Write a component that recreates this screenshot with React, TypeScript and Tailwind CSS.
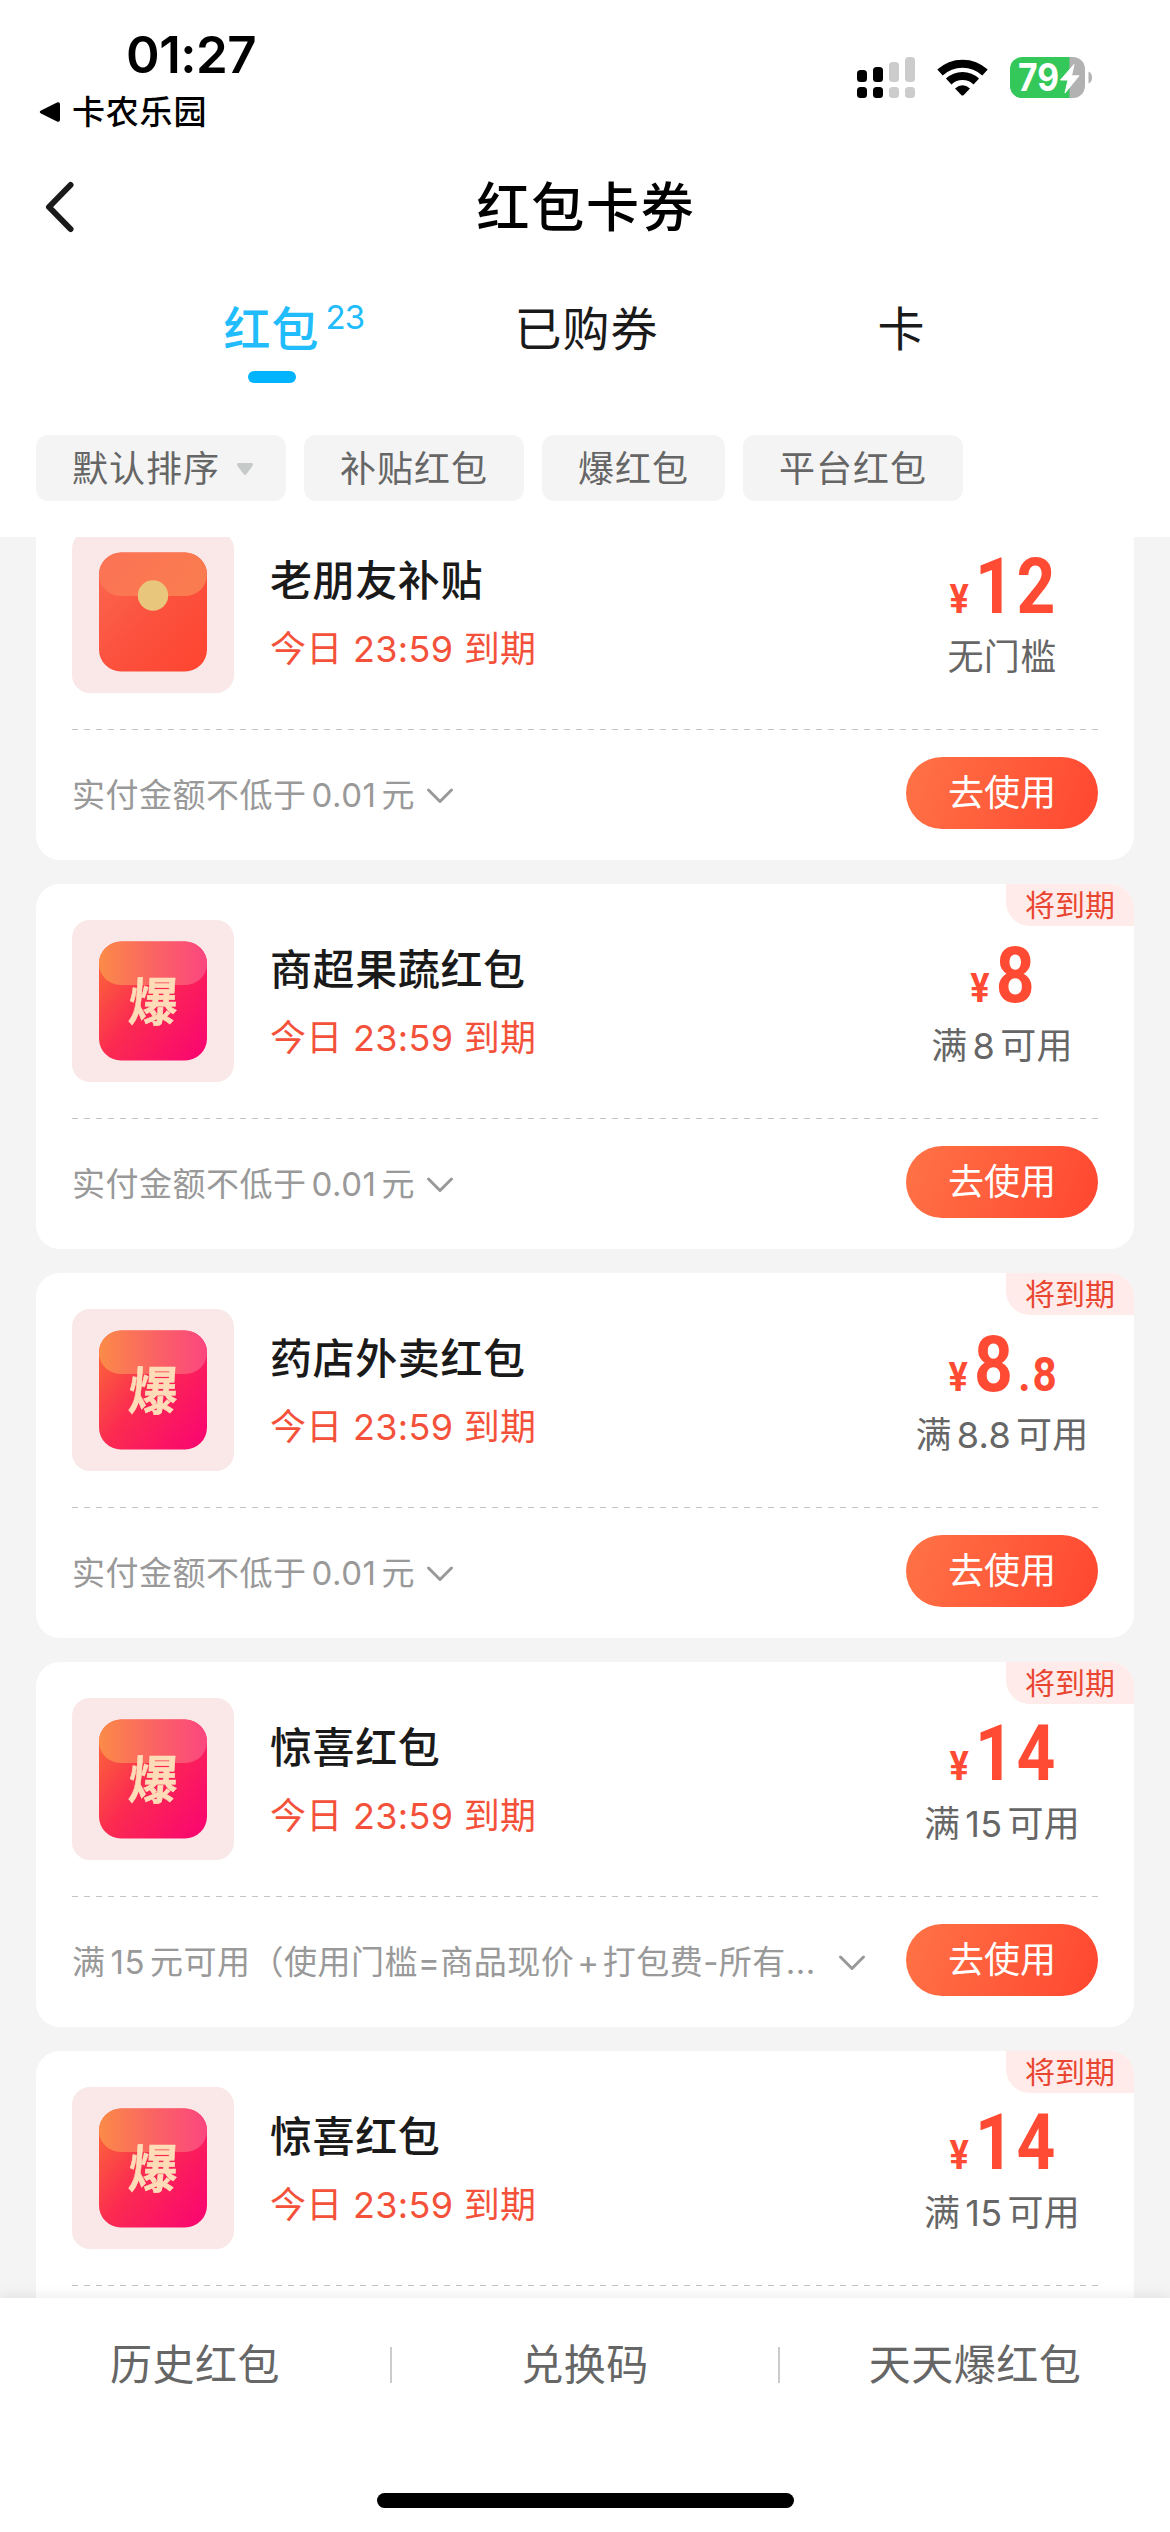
import { useState } from "react";
import clsx from "clsx";

type Coupon = {
    id: string;
    kind: 'subsidy' | 'boom';
    title: string;
    amount: string;
    threshold: string;
    rule?: string;
    long?: boolean;
    expiring: boolean;
};

const coupons: Coupon[] = [
    { id: 'c1', kind: 'subsidy', title: '老朋友补贴', amount: '12', threshold: '无门槛', rule: '实付金额不低于0.01元', expiring: false },
    { id: 'c2', kind: 'boom', title: '商超果蔬红包', amount: '8', threshold: '满8可用', rule: '实付金额不低于0.01元', expiring: true },
    { id: 'c3', kind: 'boom', title: '药店外卖红包', amount: '8.8', threshold: '满8.8可用', rule: '实付金额不低于0.01元', expiring: true },
    { id: 'c4', kind: 'boom', title: '惊喜红包', amount: '14', threshold: '满15可用', rule: '满15元可用（使用门槛=商品现价+打包费-所有...', long: true, expiring: true },
    { id: 'c5', kind: 'boom', title: '惊喜红包', amount: '14', threshold: '满15可用', expiring: true },
];

const tabs = [
    { name: '红包', count: 23 },
    { name: '已购券', count: 0 },
    { name: '卡', count: 0 },
];

const filters = ['默认排序', '补贴红包', '爆红包', '平台红包'];

// Adds a little air between numbers and Chinese characters
function Spaced({ text }: { text: string }) {
    return (
        <>
            {text.split(/(\d[\d.]*|\+)/).map((part, i) =>
                /^[\d+]/.test(part) ? <span key={i} className={part === '+' ? 'mx-[3px]' : 'mx-[5px]'}>{part}</span> : part
            )}
        </>
    );
}

function StatusBar() {
    return (
        <div className="flex h-[147px] justify-between pl-[38px] pr-[77px] text-black">
            <div className="flex flex-col">
                <div className="mt-[28px] ml-[88px] text-[51px] leading-[54px] font-semibold tracking-[-0.5px]">01:27</div>
                <div className="mt-[10px] flex items-center gap-[11px]">
                    <svg width="23" height="22" viewBox="0 0 23 22">
                        <path d="M3 9.5 19 1.4Q22 .4 22 3.500V18.500Q22 21.600 19 20.600L3 12.500Q.5 11 3 9.500Z" />
                    </svg>
                    <span className="text-[33px] leading-[40px] font-medium tracking-[0.8px]">卡农乐园</span>
                </div>
            </div>
            <svg className="mt-[54px]" width="236" height="48" viewBox="0 0 236 48">
                <g fill="#000">
                    <rect x="0" y="16" width="10" height="12" rx="3.500" />
                    <rect x="16" y="13" width="10" height="15" rx="3.500" />
                    <rect x="0" y="33" width="10" height="11" rx="3.500" />
                    <rect x="16" y="33" width="10" height="11" rx="3.500" />
                </g>
                <g fill="#ccc">
                    <rect x="32" y="8" width="10" height="20" rx="3.500" />
                    <rect x="48" y="3" width="10" height="25" rx="3.500" />
                    <rect x="32" y="33" width="10" height="11" rx="3.500" />
                    <rect x="48" y="33" width="10" height="11" rx="3.500" />
                </g>
                <g fill="none" stroke="#000" strokeWidth="8">
                    <path d="M83 18.500A33 33 0 0 1 128 18.500" />
                    <path d="M91.700 27.500A20 20 0 0 1 119.300 27.500" />
                </g>
                <path d="M98 34.500Q105.500 28 113 34.500L106.500 41.200Q105.500 42 104.500 41.200Z" />
                <path d="M165 3h48v41h-48a12 12 0 0 1-12-12V15a12 12 0 0 1 12-12Z" fill="#34c759" />
                <path d="M212.500 3H216a12 12 0 0 1 12 12v17a12 12 0 0 1-12 12h-3.500Z" fill="#b2b2b2" />
                <path d="M231.500 17.500Q235 19 235 23.500T231.500 29.500Z" fill="#b2b2b2" />
                <text x="161" y="36.700" fill="#fff" fontSize="38" fontWeight="700" textLength="41" lengthAdjust="spacingAndGlyphs">79</text>
                <path d="M217 10.500 203.500 26H211L208 39 222 21.800H214.500Z" fill="#fff" stroke="#fff" strokeWidth="1" strokeLinejoin="round" />
            </svg>
        </div>
    );
}

function RedPacket({ kind }: { kind: Coupon['kind'] }) {
    return (
        <div className="h-[162px] w-[162px] shrink-0 overflow-hidden rounded-[18px] bg-[#f9e8e7]">
            <svg width="162" height="162" viewBox="0 0 162 162">
                <defs>
                    <linearGradient id="subsidy" x1="0" y1="0" x2="1" y2="1">
                        <stop offset="0" stopColor="#fb6a52" />
                        <stop offset="0.500" stopColor="#fb523e" />
                        <stop offset="1" stopColor="#ff4430" />
                    </linearGradient>
                    <linearGradient id="subsidyFlap" x1="0" y1="0" x2="1" y2="0.300">
                        <stop offset="0" stopColor="#fb7355" />
                        <stop offset="1" stopColor="#fb7b50" />
                    </linearGradient>
                    <linearGradient id="boom" x1="0" y1="0.100" x2="1" y2="0.900">
                        <stop offset="0" stopColor="#fb6a38" />
                        <stop offset="0.450" stopColor="#fb2b50" />
                        <stop offset="1" stopColor="#fa0670" />
                    </linearGradient>
                    <linearGradient id="boomFlap" x1="0" y1="0" x2="1" y2="0">
                        <stop offset="0" stopColor="#fb8b48" />
                        <stop offset="0.500" stopColor="#fa6462" />
                        <stop offset="1" stopColor="#fb4680" />
                    </linearGradient>
                </defs>
                <rect x="27" y="21.500" width="108" height="119" rx="22" fill={`url(#${kind})`} />
                <path d="M27 43.500a22 22 0 0 1 22-22h64a22 22 0 0 1 22 22a21.500 21.500 0 0 1-21.500 21.500h-65a21.500 21.500 0 0 1-21.500-21.500Z" fill={`url(#${kind}Flap)`} />
                {kind === 'subsidy' ? (
                    <circle cx="81" cy="64.500" r="15.200" fill="#e8c67c" />
                ) : (
                    <text x="0" y="0" transform="translate(80 101) skewX(-4) scale(0.940 1)" textAnchor="middle" fontSize="52" fontWeight="700" fill="#ffdcb8" stroke="#ffdcb8" strokeWidth="0.600">爆</text>
                )}
            </svg>
        </div>
    );
}

function Price({ amount }: { amount: string }) {
    const [whole, decimal] = amount.split('.');
    return (
        <div className="flex h-[78px] origin-center scale-x-[0.88] items-baseline justify-center font-['Roboto','Noto_Sans_CJK_SC',sans-serif] font-bold text-[#ff4b33]">
            <span className="mr-[7px] ml-[4px] text-[41px] leading-[78px]">¥</span>
            <span className="text-[77px] leading-[78px] tracking-[3px]">{whole}</span>
            {decimal && <span className="ml-[3px] text-[48px] leading-[78px] tracking-[2.5px]">.{decimal}</span>}
        </div>
    );
}

function CouponCard({ coupon }: { coupon: Coupon }) {
    return (
        <div className="relative h-[365px] shrink-0 overflow-hidden rounded-[24px] bg-white px-[36px]">
            {coupon.expiring && (
                <div className="absolute top-0 right-0 flex h-[42px] w-[128px] items-center justify-center rounded-bl-[24px] bg-[#ffebe9] text-[30px] text-[#e94632]">
                    将到期
                </div>
            )}

            <div className="flex h-[234px] pt-[36px]">
                <RedPacket kind={coupon.kind} />
                <div className="ml-[36px] flex flex-1 flex-col pt-[22px]">
                    <h2 className="text-[42px] leading-[56px] font-medium tracking-[0.6px] text-[#1a1a1a]">{coupon.title}</h2>
                    <p className="mt-[15px] text-[36px] leading-[50px] tracking-[0.3px] text-[#f4513b]">今日 23:59 到期</p>
                </div>
                <div className="w-[192px] pt-[17px]">
                    <Price amount={coupon.amount} />
                    <p className="mt-[6px] text-center text-[36px] leading-[50px] tracking-[0.3px] whitespace-nowrap text-[#666]">
                        <Spaced text={coupon.threshold} />
                    </p>
                </div>
            </div>

            {/* dashed divider */}
            <div className="h-px bg-[repeating-linear-gradient(90deg,#c4c4c4_0_6px,transparent_6px_12px)]" />

            {coupon.rule && (
                <div className="flex h-[126px] items-center justify-between">
                    <div className="flex items-center pt-[6px] text-[33px] tracking-[0.5px] whitespace-nowrap text-[#999]">
                        <span><Spaced text={coupon.rule} /></span>
                        <svg className={coupon.long ? 'ml-[22px]' : 'ml-[11px]'} width="28" height="18" viewBox="0 0 28 18" fill="none" stroke="#999" strokeWidth="3" strokeLinecap="round" strokeLinejoin="round">
                            <path d="M2.500 3 14 14.500 25.500 3" />
                        </svg>
                    </div>
                    <button className="flex h-[72px] w-[192px] items-center justify-center rounded-full bg-[linear-gradient(110deg,#ff7346,#ff4630)] text-[36px] text-white">
                        去使用
                    </button>
                </div>
            )}
        </div>
    );
}

export default function App() {
    const [activeTab, setActiveTab] = useState('红包');

    return (
        <div className="flex h-[2532px] w-[1170px] flex-col overflow-hidden bg-white font-['Inter','Noto_Sans_CJK_SC',sans-serif]">
            <header className="h-[537px] shrink-0">
                <StatusBar />

                <div className="grid h-[120px] grid-cols-3 items-center px-[44px]">
                    <svg width="32" height="54" viewBox="0 0 32 54" fill="none" stroke="#1a1a1a" strokeWidth="6" strokeLinecap="round" strokeLinejoin="round">
                        <path d="M26.500 5 5 27 26.500 49" />
                    </svg>
                    <h1 className="pt-[2px] pl-[2px] text-center text-[53px] leading-none font-medium tracking-[1.8px] whitespace-nowrap text-black">红包卡券</h1>
                </div>

                <div className="flex h-[168px] justify-center pt-[26px] pl-[3px]">
                    {tabs.map(tab => (
                        <button
                            key={tab.name}
                            className={clsx(
                                'flex w-[315px] flex-col items-center text-[47px] leading-[72px] tracking-[1px]',
                                activeTab === tab.name ? 'font-medium text-[#20bcfc]' : 'text-[#1a1a1a]'
                            )}
                            onClick={() => setActiveTab(tab.name)}
                        >
                            <span className="relative">
                                {tab.name}
                                {tab.count > 0 && (
                                    <span className="absolute top-[2px] left-full ml-[6px] text-[33px] leading-[44px] font-normal tracking-[-0.8px]">{tab.count}</span>
                                )}
                            </span>
                            {activeTab === tab.name && <span className="mt-[6px] h-[12px] w-[48px] rounded-full bg-[#00b4ff]" />}
                        </button>
                    ))}
                </div>

                <div className="flex gap-[18px] px-[36px]">
                    {filters.map((name, i) => (
                        <button key={name} className="flex h-[66px] items-center rounded-[12px] bg-[#f4f4f4] px-[36px] pt-[2px] text-[36px] tracking-[1px] text-[#666]">
                            {name}
                            {i === 0 && (
                                <svg className="-mr-[4px] ml-[16px]" width="18" height="14" viewBox="0 0 18 14">
                                    <path d="M3 1h12q3 0 1.500 3L10.500 12q-1.500 2-3 0L1.500 4Q0 1 3 1Z" fill="#c6cbc9" />
                                </svg>
                            )}
                        </button>
                    ))}
                </div>
            </header>

            <main className="flex min-h-0 flex-1 flex-col overflow-hidden bg-[#f4f4f4] px-[36px]">
                <div className="-mt-[42px] flex flex-col gap-[24px]">
                    {coupons.map(coupon => (
                        <CouponCard key={coupon.id} coupon={coupon} />
                    ))}
                </div>
            </main>

            <footer className="relative flex h-[234px] shrink-0 flex-col items-center justify-between bg-white pb-[24px] shadow-[0_-3px_12px_rgba(0,0,0,0.07)]">
                <div className="grid h-[134px] w-full grid-cols-3 items-center text-center text-[42px] leading-[36px] tracking-[0.5px] text-[#666]">
                    <span>历史红包</span>
                    <span className="border-x-2 border-[#ccc]">兑换码</span>
                    <span>天天爆红包</span>
                </div>
                <div className="h-[15px] w-[417px] rounded-full bg-black" />
            </footer>
        </div>
    );
}
